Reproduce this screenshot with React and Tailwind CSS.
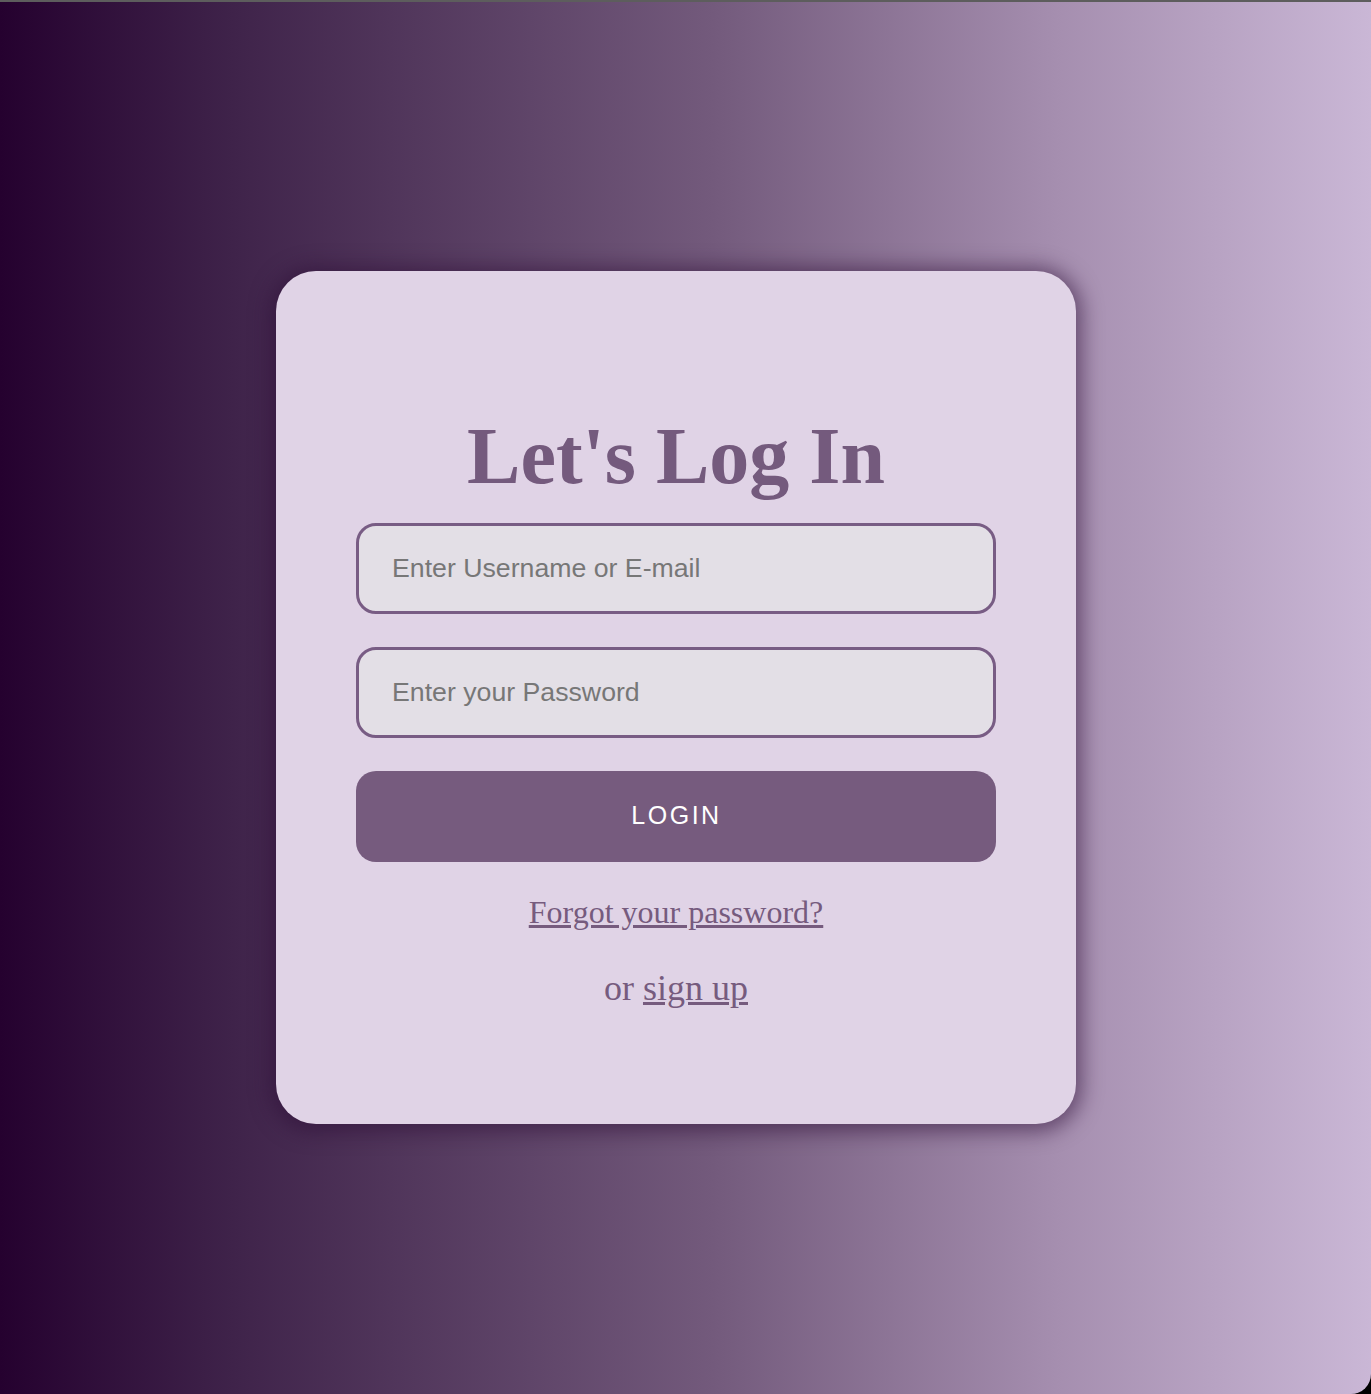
import React, { useState } from "react";

const Login = () => {
  const [formData, setFormData] = useState({ user: "", password: "" });

  const handleChange = (e) => {
    setFormData((prev) => ({ ...prev, [e.target.name]: e.target.value }));
  };

  return (
    <div className="h-[1394px] w-full bg-black overflow-hidden">
      <div className="h-full w-full flex items-center justify-center pr-[19px] border-t-2 border-[#5d5d5d] rounded-br-[20px] bg-[linear-gradient(to_right,#25012f_0%,#3f234a_17%,#735a7c_52%,#a58eaf_77%,#cab7d6_100%)]">
        <div className="w-[800px] -mt-[2px] rounded-[40px] bg-[#e0d3e6] px-20 pt-[145px] pb-[118px] flex flex-col shadow-[0_2px_20px_6px_rgba(45,15,55,0.55)]">
          <h1
            className="text-center text-[80px] leading-none font-bold text-[#745a7d] mb-[27px]"
            style={{ fontFamily: '"Liberation Serif", "Times New Roman", serif' }}
          >
            Let's Log In
          </h1>

          <form
            className="flex flex-col gap-[33px]"
            onSubmit={(e) => e.preventDefault()}
            style={{ fontFamily: '"Liberation Sans", Arial, sans-serif' }}
          >
            <input
              type="text"
              name="user"
              placeholder="Enter Username or E-mail"
              value={formData.user}
              onChange={handleChange}
              className="h-[91px] w-full rounded-[20px] border-[3px] border-[#785c84] bg-[#e3dfe6] px-[33px] text-[26.7px] text-[#444] placeholder:text-[#777] outline-none"
            />
            <input
              type="password"
              name="password"
              placeholder="Enter your Password"
              value={formData.password}
              onChange={handleChange}
              className="h-[91px] w-full rounded-[20px] border-[3px] border-[#785c84] bg-[#e3dfe6] px-[33px] text-[26.7px] text-[#444] placeholder:text-[#777] outline-none"
            />
            <button
              type="submit"
              className="h-[91px] w-full rounded-[20px] bg-[#765b7e] text-white text-[25px] tracking-[2.5px] pl-[1px]"
            >
              LOGIN
            </button>
          </form>

          <div
            className="flex flex-col items-center text-[#765b7e]"
            style={{ fontFamily: '"Liberation Serif", "Times New Roman", serif' }}
          >
            <a href="#" className="mt-[34px] text-[32px] leading-none underline">
              Forgot your password?
            </a>
            <p className="mt-[42px] text-[36px] leading-none">
              or{" "}
              <a href="#" className="underline">
                sign up
              </a>
            </p>
          </div>
        </div>
      </div>
    </div>
  );
};

export default Login;
